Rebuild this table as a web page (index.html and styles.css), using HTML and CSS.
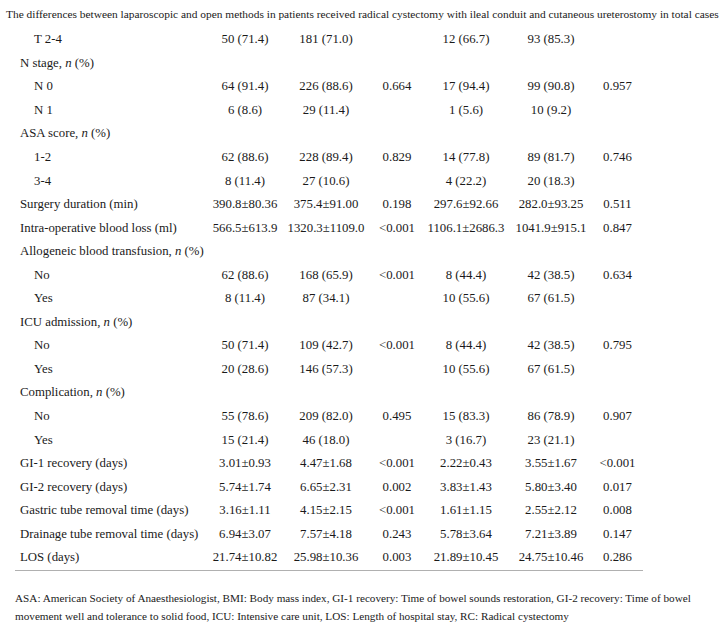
FILE: index.html
```html
<!DOCTYPE html>
<html>
<head>
<meta charset="utf-8">
<link rel="stylesheet" href="styles.css">
</head>
<body>
<div class="page">
  <div class="title">The differences between laparoscopic and open methods in patients received radical cystectomy with ileal conduit and cutaneous ureterostomy in total cases</div>
  <div class="table">
    <div class="row"><div class="lbl sub">T 2-4</div><div>50 (71.4)</div><div>181 (71.0)</div><div></div><div>12 (66.7)</div><div>93 (85.3)</div><div></div></div>
    <div class="row"><div class="lbl">N stage, <i>n</i> (%)</div><div></div><div></div><div></div><div></div><div></div><div></div></div>
    <div class="row"><div class="lbl sub">N 0</div><div>64 (91.4)</div><div>226 (88.6)</div><div>0.664</div><div>17 (94.4)</div><div>99 (90.8)</div><div>0.957</div></div>
    <div class="row"><div class="lbl sub">N 1</div><div>6 (8.6)</div><div>29 (11.4)</div><div></div><div>1 (5.6)</div><div>10 (9.2)</div><div></div></div>
    <div class="row"><div class="lbl">ASA score, <i>n</i> (%)</div><div></div><div></div><div></div><div></div><div></div><div></div></div>
    <div class="row"><div class="lbl sub">1-2</div><div>62 (88.6)</div><div>228 (89.4)</div><div>0.829</div><div>14 (77.8)</div><div>89 (81.7)</div><div>0.746</div></div>
    <div class="row"><div class="lbl sub">3-4</div><div>8 (11.4)</div><div>27 (10.6)</div><div></div><div>4 (22.2)</div><div>20 (18.3)</div><div></div></div>
    <div class="row"><div class="lbl">Surgery duration (min)</div><div>390.8±80.36</div><div>375.4±91.00</div><div>0.198</div><div>297.6±92.66</div><div>282.0±93.25</div><div>0.511</div></div>
    <div class="row"><div class="lbl">Intra-operative blood loss (ml)</div><div>566.5±613.9</div><div>1320.3±1109.0</div><div>&lt;0.001</div><div>1106.1±2686.3</div><div>1041.9±915.1</div><div>0.847</div></div>
    <div class="row"><div class="lbl">Allogeneic blood transfusion, <i>n</i> (%)</div><div></div><div></div><div></div><div></div><div></div><div></div></div>
    <div class="row"><div class="lbl sub">No</div><div>62 (88.6)</div><div>168 (65.9)</div><div>&lt;0.001</div><div>8 (44.4)</div><div>42 (38.5)</div><div>0.634</div></div>
    <div class="row"><div class="lbl sub">Yes</div><div>8 (11.4)</div><div>87 (34.1)</div><div></div><div>10 (55.6)</div><div>67 (61.5)</div><div></div></div>
    <div class="row"><div class="lbl">ICU admission, <i>n</i> (%)</div><div></div><div></div><div></div><div></div><div></div><div></div></div>
    <div class="row"><div class="lbl sub">No</div><div>50 (71.4)</div><div>109 (42.7)</div><div>&lt;0.001</div><div>8 (44.4)</div><div>42 (38.5)</div><div>0.795</div></div>
    <div class="row"><div class="lbl sub">Yes</div><div>20 (28.6)</div><div>146 (57.3)</div><div></div><div>10 (55.6)</div><div>67 (61.5)</div><div></div></div>
    <div class="row"><div class="lbl">Complication, <i>n</i> (%)</div><div></div><div></div><div></div><div></div><div></div><div></div></div>
    <div class="row"><div class="lbl sub">No</div><div>55 (78.6)</div><div>209 (82.0)</div><div>0.495</div><div>15 (83.3)</div><div>86 (78.9)</div><div>0.907</div></div>
    <div class="row"><div class="lbl sub">Yes</div><div>15 (21.4)</div><div>46 (18.0)</div><div></div><div>3 (16.7)</div><div>23 (21.1)</div><div></div></div>
    <div class="row"><div class="lbl">GI-1 recovery (days)</div><div>3.01±0.93</div><div>4.47±1.68</div><div>&lt;0.001</div><div>2.22±0.43</div><div>3.55±1.67</div><div>&lt;0.001</div></div>
    <div class="row"><div class="lbl">GI-2 recovery (days)</div><div>5.74±1.74</div><div>6.65±2.31</div><div>0.002</div><div>3.83±1.43</div><div>5.80±3.40</div><div>0.017</div></div>
    <div class="row"><div class="lbl">Gastric tube removal time (days)</div><div>3.16±1.11</div><div>4.15±2.15</div><div>&lt;0.001</div><div>1.61±1.15</div><div>2.55±2.12</div><div>0.008</div></div>
    <div class="row"><div class="lbl">Drainage tube removal time (days)</div><div>6.94±3.07</div><div>7.57±4.18</div><div>0.243</div><div>5.78±3.64</div><div>7.21±3.89</div><div>0.147</div></div>
    <div class="row"><div class="lbl">LOS (days)</div><div>21.74±10.82</div><div>25.98±10.36</div><div>0.003</div><div>21.89±10.45</div><div>24.75±10.46</div><div>0.286</div></div>
  </div>
  <div class="note">ASA: American Society of Anaesthesiologist, BMI: Body mass index, GI-1 recovery: Time of bowel sounds restoration, GI-2 recovery: Time of bowel movement well and tolerance to solid food, ICU: Intensive care unit, LOS: Length of hospital stay, RC: Radical cystectomy</div>
</div>
</body>
</html>
```
FILE: styles.css
```css
html, body {
  margin: 0;
  padding: 0;
  background: #ffffff;
}
body {
  font-family: "Liberation Serif", "Times New Roman", serif;
  color: #1a1a1a;
}
.page {
  width: 720px;
  height: 630px;
  overflow: hidden;
}
.title {
  font-size: 11.4px;
  line-height: 16px;
  padding: 6px 0 0 6px;
  white-space: nowrap;
}
.table {
  margin: 6px 0 0 15px;
  width: 628px;
  border-bottom: 1.5px solid #b0b0b0;
  font-size: 12.8px;
}
.row {
  display: grid;
  grid-template-columns: 195px 70px 92px 50px 88px 82px 51px;
  height: 23.55px;
  align-items: center;
}
.row > div {
  text-align: center;
  white-space: nowrap;
}
.row > .lbl {
  text-align: left;
  padding-left: 5px;
}
.row > .lbl.sub {
  padding-left: 19px;
}
.note {
  margin: 18px 0 0 15px;
  width: 700px;
  font-size: 11.2px;
  line-height: 18px;
}
```
